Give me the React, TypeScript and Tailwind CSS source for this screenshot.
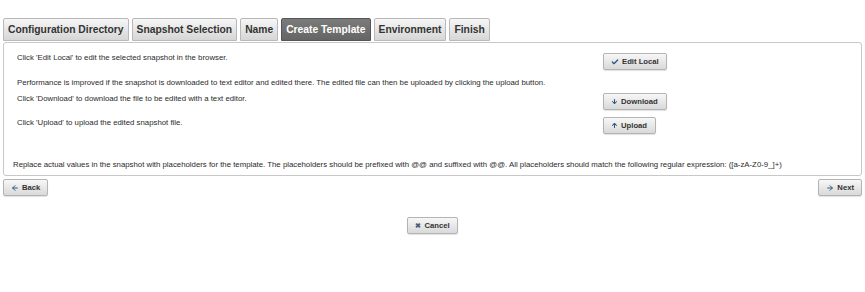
import { ReactNode } from 'react';
import { ArrowDown, ArrowLeft, ArrowRight, ArrowUp, Check } from 'lucide-react';

// Wizard steps shown across the top
const steps = [
  'Configuration Directory',
  'Snapshot Selection',
  'Name',
  'Create Template',
  'Environment',
  'Finish',
];
const activeStep = 'Create Template';

const Button = ({ icon, children }: { icon: ReactNode; children: ReactNode }) => (
  <button className="flex h-[17px] items-center gap-[3px] rounded-[2px] border border-[#b4b4b4] bg-gradient-to-b from-[#f7f7f7] to-[#d9d9d9] px-[7px] text-[7.7px] font-bold leading-none text-[#333] shadow-[0_1px_1px_rgba(0,0,0,0.12)]">
    <span className="flex items-center text-[#2f5884]">{icon}</span>
    {children}
  </button>
);

export default function App() {
  return (
    <div className="min-h-[292px] bg-white px-[3px] pt-[18px] font-['Liberation_Sans',Arial,sans-serif] text-[#2a2a2a]">
      {/* Step tabs */}
      <div className="flex gap-[3px]">
        {steps.map((step) =>
          step === activeStep ? (
            <div
              key={step}
              className="flex h-[23px] items-center rounded-t-[2px] border border-[#555] bg-gradient-to-b from-[#7b7b7b] to-[#656565] px-[4px] text-[10.3px] font-bold text-white"
            >
              {step}
            </div>
          ) : (
            <div
              key={step}
              className="flex h-[23px] items-center rounded-t-[2px] border border-[#b9b9b9] bg-gradient-to-b from-[#f6f6f6] to-[#d6d6d6] px-[4px] text-[10.3px] font-bold text-[#333]"
            >
              {step}
            </div>
          )
        )}
      </div>

      {/* Step content */}
      <div className="mt-[1px] rounded-[3px] border border-[#c8c8c8] pb-[6px] pl-[13px] pt-[10px] text-[7.8px] leading-[9px]">
        <div className="flex h-[17px] items-start">
          <p className="w-[586px]">Click 'Edit Local' to edit the selected snapshot in the browser.</p>
          <Button icon={<Check size={8} strokeWidth={4} />}>Edit Local</Button>
        </div>
        <p className="mt-[8px]">
          Performance is improved if the snapshot is downloaded to text editor and edited there. The edited file can
          then be uploaded by clicking the upload button.
        </p>
        <div className="mt-[6px] flex h-[18px] items-start">
          <p className="w-[586px] pt-[1px]">Click 'Download' to download the file to be edited with a text editor.</p>
          <Button icon={<ArrowDown size={7} strokeWidth={3.5} />}>
            <span className="pr-[1px]">Download</span>
          </Button>
        </div>
        <div className="mt-[6px] flex h-[17px] items-start">
          <p className="w-[586px] pt-[1px]">Click 'Upload' to upload the edited snapshot file.</p>
          <Button icon={<ArrowUp size={7} strokeWidth={3.5} />}>
            <span className="pr-[1px]">Upload</span>
          </Button>
        </div>
        <p className="-ml-[4px] mt-[26px]">
          Replace actual values in the snapshot with placeholders for the template. The placeholders should be
          prefixed with @@ and suffixed with @@. All placeholders should match the following regular expression:
          ([a-zA-Z0-9_]+)
        </p>
      </div>

      {/* Navigation */}
      <div className="mt-[3px] flex justify-between">
        <Button icon={<ArrowLeft size={8} strokeWidth={3} />}>Back</Button>
        <Button icon={<ArrowRight size={8} strokeWidth={3} />}>Next</Button>
      </div>
      <div className="mt-[21px] flex justify-center">
        <Button icon={<span className="text-[7px] text-[#4a5f78]">✖</span>}>Cancel</Button>
      </div>
    </div>
  );
}
